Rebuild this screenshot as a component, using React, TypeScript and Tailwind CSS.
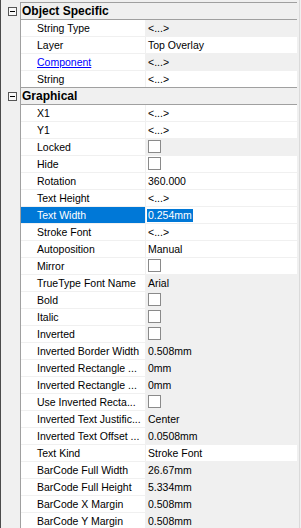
interface Row {
  name: string;
  value?: string;
  check?: boolean;
  white?: boolean;
  link?: boolean;
  selected?: boolean;
}

interface Group {
  title: string;
  rows: Row[];
}

const groups: Group[] = [
  {
    title: "Object Specific",
    rows: [
      { name: "String Type", value: "<...>" },
      { name: "Layer", value: "Top Overlay", white: true },
      { name: "Component", value: "<...>", link: true },
      { name: "String", value: "<...>", white: true },
    ],
  },
  {
    title: "Graphical",
    rows: [
      { name: "X1", value: "<...>", white: true },
      { name: "Y1", value: "<...>", white: true },
      { name: "Locked", check: true },
      { name: "Hide", check: true, white: true },
      { name: "Rotation", value: "360.000", white: true },
      { name: "Text Height", value: "<...>", white: true },
      { name: "Text Width", value: "0.254mm", white: true, selected: true },
      { name: "Stroke Font", value: "<...>", white: true },
      { name: "Autoposition", value: "Manual", white: true },
      { name: "Mirror", check: true, white: true },
      { name: "TrueType Font Name", value: "Arial" },
      { name: "Bold", check: true },
      { name: "Italic", check: true },
      { name: "Inverted", check: true },
      { name: "Inverted Border Width", value: "0.508mm" },
      { name: "Inverted Rectangle ...", value: "0mm" },
      { name: "Inverted Rectangle ...", value: "0mm" },
      { name: "Use Inverted Recta...", check: true },
      { name: "Inverted Text Justific...", value: "Center" },
      { name: "Inverted Text Offset ...", value: "0.0508mm" },
      { name: "Text Kind", value: "Stroke Font", white: true },
      { name: "BarCode Full Width", value: "26.67mm" },
      { name: "BarCode Full Height", value: "5.334mm" },
      { name: "BarCode X Margin", value: "0.508mm" },
      { name: "BarCode Y Margin", value: "0.508mm" },
    ],
  },
];

const CheckBox = () => (
  <div className="ml-px mt-px w-[13px] h-[13px] border border-[#8a8a8a] bg-white" />
);

const PropRow = ({ row }: { row: Row }) => (
  <div className="flex gap-px h-[16px] text-[10.5px] leading-[16px] text-black">
    <div
      className={`w-[124px] shrink-0 pl-[16px] whitespace-nowrap overflow-hidden ${
        row.selected ? "bg-[#0078d7] text-white" : "bg-white"
      }`}
    >
      {row.link ? (
        <span className="text-[#0000ff] underline">{row.name}</span>
      ) : (
        row.name
      )}
    </div>
    <div
      className={`w-[151px] shrink-0 pl-[1px] whitespace-nowrap overflow-hidden ${
        row.white ? "bg-white" : ""
      }`}
    >
      {row.check ? (
        <CheckBox />
      ) : row.selected ? (
        <span className="inline-block mt-[1px] px-px leading-[13px] bg-[#0078d7] text-white">
          {row.value}
        </span>
      ) : (
        <span className="pl-px">{row.value}</span>
      )}
    </div>
  </div>
);

const App = () => {
  return (
    <div className="w-[301px] h-[528px] bg-[#f0f0f0] overflow-hidden flex font-['Liberation_Sans',Arial,sans-serif]">
      <div className="w-px shrink-0 bg-[#4b4b4b]" />
      <div className="w-[296px] shrink-0 pt-[2px]">
        {groups.map((group) => (
          <div key={group.title} className="flex">
            <div className="w-[19px] shrink-0">
              <div className="ml-[7px] mt-[5px] w-[9px] h-[9px] border border-[#555] bg-[#f8f8f8] flex items-center justify-center">
                <div className="w-[5px] h-px bg-black" />
              </div>
            </div>
            <div className="w-[277px] shrink-0 border-l border-[#a0a0a0]">
              <div className="h-[18px] border-y border-[#a0a0a0] pl-px text-[12px] leading-[16px] font-bold text-black whitespace-nowrap">
                {group.title}
              </div>
              <div className="flex flex-col gap-px">
                {group.rows.map((row, index) => (
                  <PropRow key={index} row={row} />
                ))}
              </div>
            </div>
          </div>
        ))}
      </div>
      <div className="w-[2px] shrink-0" />
      <div className="w-px shrink-0 bg-[#dadada]" />
      <div className="w-px shrink-0" />
    </div>
  );
};

export default App;
